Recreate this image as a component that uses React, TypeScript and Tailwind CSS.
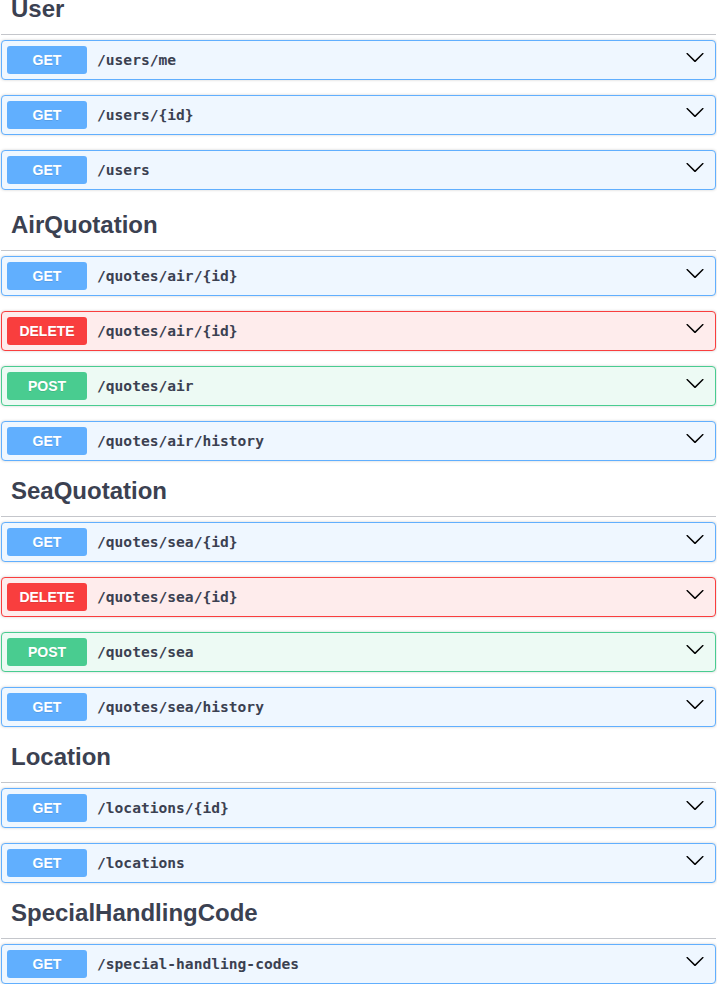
import React from 'react'

type Method = 'GET' | 'POST' | 'DELETE'

const methodStyles: Record<Method, { block: string; badge: string }> = {
    GET: {
        block: 'bg-[#eff7ff] border-[#61affe]',
        badge: 'bg-[#61affe]',
    },
    POST: {
        block: 'bg-[#edfaf4] border-[#49cc90]',
        badge: 'bg-[#49cc90]',
    },
    DELETE: {
        block: 'bg-[#feecec] border-[#f93e3e]',
        badge: 'bg-[#f93e3e]',
    },
}

const sections: { tag: string; ops: { method: Method; path: string }[] }[] = [
    {
        tag: 'User',
        ops: [
            { method: 'GET', path: '/users/me' },
            { method: 'GET', path: '/users/{id}' },
            { method: 'GET', path: '/users' },
        ],
    },
    {
        tag: 'AirQuotation',
        ops: [
            { method: 'GET', path: '/quotes/air/{id}' },
            { method: 'DELETE', path: '/quotes/air/{id}' },
            { method: 'POST', path: '/quotes/air' },
            { method: 'GET', path: '/quotes/air/history' },
        ],
    },
    {
        tag: 'SeaQuotation',
        ops: [
            { method: 'GET', path: '/quotes/sea/{id}' },
            { method: 'DELETE', path: '/quotes/sea/{id}' },
            { method: 'POST', path: '/quotes/sea' },
            { method: 'GET', path: '/quotes/sea/history' },
        ],
    },
    {
        tag: 'Location',
        ops: [
            { method: 'GET', path: '/locations/{id}' },
            { method: 'GET', path: '/locations' },
        ],
    },
    {
        tag: 'SpecialHandlingCode',
        ops: [{ method: 'GET', path: '/special-handling-codes' }],
    },
]

function Chevron() {
    return (
        <svg viewBox="0 0 20 20" className="w-5 h-5 -mt-[6px] mr-[5px] shrink-0" fill="#000">
            <path d="M17.418 6.109c.272-.268.709-.268.979 0s.271.701 0 .969l-7.908 7.83c-.27.268-.707.268-.979 0l-7.908-7.83c-.27-.268-.27-.701 0-.969.271-.268.709-.268.98 0L10 13.25l7.418-7.141z" />
        </svg>
    )
}

function Operation({ method, path }: { method: Method; path: string }) {
    const s = methodStyles[method]
    return (
        <div
            className={`border rounded-[4px] mb-[15px] shadow-[0_0_3px_rgba(0,0,0,0.19)] ${s.block}`}
        >
            <div className="flex items-center p-[5px]">
                {/* Method badge */}
                <span
                    className={`w-[80px] py-[6px] rounded-[3px] text-center text-white text-[14px] leading-[16px] font-bold font-['Liberation_Sans',Arial,sans-serif] [text-shadow:0_1px_0_rgba(0,0,0,0.1)] ${s.badge}`}
                >
                    {method}
                </span>

                {/* Path */}
                <span className="flex-1 px-[10px] text-[#3b4151] text-[14.6px] font-bold font-['DejaVu_Sans_Mono',monospace]">
                    {path}
                </span>

                <Chevron />
            </div>
        </div>
    )
}

export default function App() {
    return (
        <div className="bg-white min-h-screen px-px -mt-[6px]">
            {sections.map((section, i) => (
                <section key={section.tag} className={i === 1 ? 'pt-[5px]' : ''}>
                    {/* Tag heading */}
                    <h3 className="pt-px pb-[11px] pl-[10px] mb-[5px] border-b border-[#c4c6cb] text-[24px] leading-[28px] font-bold text-[#3b4151] font-['Liberation_Sans',Arial,sans-serif]">
                        {section.tag}
                    </h3>

                    {section.ops.map((op) => (
                        <Operation key={op.method + op.path} method={op.method} path={op.path} />
                    ))}
                </section>
            ))}
        </div>
    )
}
